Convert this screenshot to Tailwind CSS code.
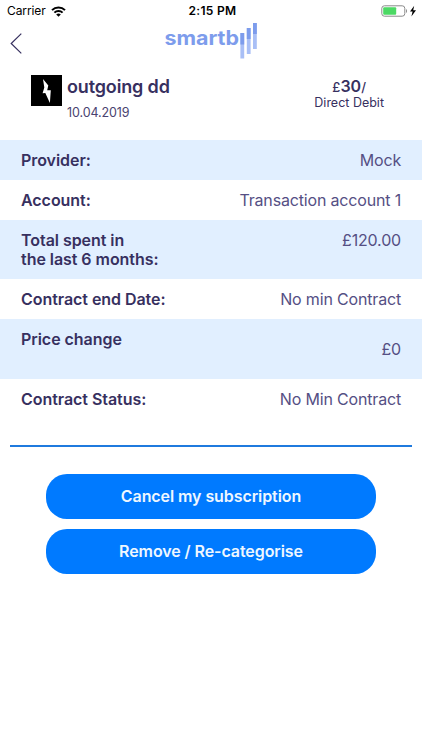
<!DOCTYPE html>
<html lang="en">
<head>
  <meta charset="UTF-8" />
  <meta name="viewport" content="width=device-width, initial-scale=1.0"/>
  <title>smartbill - outgoing dd</title>
  <script src="https://cdn.jsdelivr.net/npm/@tailwindcss/browser@4"></script>
</head>
<body class="bg-white h-[750px] overflow-hidden font-['Inter',sans-serif] text-[#37305f]">

<!-- Status bar -->
<div class="grid grid-cols-3 items-center h-[22px] px-[7px] text-black">
  <div class="flex items-center gap-[5px]">
    <span class="text-[12px] tracking-[-0.1px]">Carrier</span>
    <svg class="w-[15px] h-[11px]" viewBox="0 0 15 11" fill="none" stroke="#000" stroke-width="2">
      <path d="M1 4.1a9.2 9.2 0 0 1 13 0"/>
      <path d="M3.4 6.6a5.8 5.8 0 0 1 8.2 0"/>
      <path d="M7.5 10.8 5.2 8.5a3.3 3.3 0 0 1 4.6 0z" fill="#000" stroke="none"/>
    </svg>
  </div>
  <span class="text-[12px] font-semibold text-center pl-[3px] tracking-[0.3px] whitespace-nowrap">2:15 PM</span>
  <div class="flex justify-end">
    <svg class="w-[36px] h-[12px] -mr-[2px]" viewBox="0 0 36 12">
      <rect x="0.8" y="0.8" width="23" height="10.4" rx="2.6" fill="none" stroke="#8a8a8a"/>
      <rect x="2.2" y="2.3" width="13" height="7.4" rx="1" fill="#4cd964"/>
      <path d="M25 4v4c1.4-.6 1.4-3.4 0-4z" fill="#8a8a8a"/>
      <path d="M33.2.8 29 6.5h2.6L30.4 11.4 35 5.2h-2.8z" fill="#000"/>
    </svg>
  </div>
</div>

<!-- Header -->
<header class="grid grid-cols-3 h-[40px]">
  <a href="#" class="pl-[10px] pt-[11px]">
    <svg class="w-[12px] h-[21px]" viewBox="0 0 12 21" fill="none" stroke="#37305f" stroke-width="1.2">
      <path d="M11.3.6 1.2 10.5l10.1 9.9"/>
    </svg>
  </a>
  <div class="flex justify-center">
    <svg class="w-[94px] h-[38px]" viewBox="0 0 94 38">
      <text x="0.5" y="23" textLength="74.5" lengthAdjust="spacingAndGlyphs" font-size="19.5" font-weight="700" fill="#7d9cec">smartb</text>
      <g fill="#a9bff6">
        <rect x="76.4" y="11" width="3.8" height="25.5"/>
        <rect x="82.8" y="6" width="3.8" height="26"/>
        <rect x="89" y="1" width="3.8" height="26"/>
      </g>
      <g fill="#7d9cec">
        <rect x="76.4" y="11" width="3.8" height="11.5"/>
        <rect x="82.8" y="6" width="3.8" height="11"/>
        <rect x="89" y="1" width="3.8" height="11"/>
      </g>
    </svg>
  </div>
</header>

<!-- Subscription summary -->
<section class="flex justify-between h-[78px] pl-[31px] pr-[38px] pt-[13px]">
  <div class="flex gap-[5px]">
    <svg class="w-[31px] h-[31px] bg-black" viewBox="0 0 31 31">
      <path d="M12 4 17.3 10.5 16.2 15.2 19.8 15.2 18.9 28 14.3 18 11.6 18.2 13.3 12.5z" fill="#fff"/>
    </svg>
    <div>
      <h1 class="text-[18px] leading-[24px] font-semibold tracking-[-0.15px]">outgoing dd</h1>
      <p class="text-[12.5px] leading-[16px] mt-[6px] tracking-[-0.1px] text-[#4a4370]">10.04.2019</p>
    </div>
  </div>
  <div class="text-center">
    <p class="text-[13px] leading-[20px] mt-[1px] font-medium">£<span class="text-[16px] font-semibold">30</span>/</p>
    <p class="text-[12.5px] leading-[16px] -mt-[2px]">Direct Debit</p>
  </div>
</section>

<!-- Details -->
<dl class="text-[16px] leading-[19px] [&_dt]:font-semibold [&_dt]:tracking-[-0.05px] [&_dd]:text-[#554f84] [&_dd]:tracking-[-0.17px]">
  <div class="flex justify-between h-[40px] px-[21px] pt-[11px] bg-[#e1efff]">
    <dt>Provider:</dt>
    <dd>Mock</dd>
  </div>
  <div class="flex justify-between h-[40px] px-[21px] pt-[11px]">
    <dt>Account:</dt>
    <dd>Transaction account 1</dd>
  </div>
  <div class="flex justify-between h-[59px] px-[21px] pt-[11px] bg-[#e1efff]">
    <dt>Total spent in<br>the last 6 months:</dt>
    <dd>£120.00</dd>
  </div>
  <div class="flex justify-between h-[40px] px-[21px] pt-[11px]">
    <dt>Contract end Date:</dt>
    <dd>No min Contract</dd>
  </div>
  <div class="flex justify-between h-[60px] px-[21px] pt-[11px] bg-[#e1efff]">
    <dt>Price change</dt>
    <dd class="mt-[10px]">£0</dd>
  </div>
  <div class="flex justify-between h-[66px] px-[21px] pt-[11px]">
    <dt>Contract Status:</dt>
    <dd>No Min Contract</dd>
  </div>
</dl>

<hr class="ml-[10px] mr-[10px] h-[2px] border-0 bg-[#1f7ade]">

<!-- Actions -->
<div class="flex flex-col gap-[10px] mx-[46px] mt-[27px] text-[16px] font-semibold tracking-[-0.08px] text-[#eef7ff]">
  <button class="h-[45px] pb-[2px] rounded-[21px] bg-[#007aff]">Cancel my subscription</button>
  <button class="h-[45px] pb-[2px] rounded-[21px] bg-[#007aff]">Remove / Re-categorise</button>
</div>

</body>
</html>
